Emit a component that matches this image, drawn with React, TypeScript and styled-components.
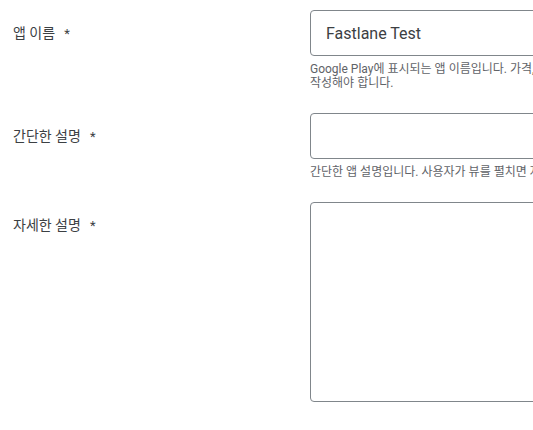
import { FC } from 'react';
import styled, { createGlobalStyle } from 'styled-components';

const GlobalStyle = createGlobalStyle`
  html, body {
    margin: 0;
    padding: 0;
    background: #ffffff;
    overflow: hidden;
  }
  body {
    font-family: Roboto, 'Noto Sans CJK KR', sans-serif;
  }
`;

const App: FC = () => {
  return (
    <>
      <GlobalStyle />
      <Form>
        <Field>
          <Label>
            앱 이름<Required>*</Required>
          </Label>
          <Control>
            <Input defaultValue="Fastlane Test" />
            <Helper>
              Google Play에 표시되는 앱 이름입니다. 가격, 순위, 이모티콘 또는 반복되는 특수 기호는 포함하지 말고 30자 이내로
              <br />
              작성해야 합니다.
            </Helper>
          </Control>
        </Field>
        <Field>
          <Label>
            간단한 설명<Required>*</Required>
          </Label>
          <Control>
            <Input defaultValue="" />
            <Helper>간단한 앱 설명입니다. 사용자가 뷰를 펼치면 자세한 설명을 볼 수 있습니다. 80자 이내로 작성해야 합니다.</Helper>
          </Control>
        </Field>
        <Field>
          <Label>
            자세한 설명<Required>*</Required>
          </Label>
          <Control>
            <TextArea defaultValue="" />
          </Control>
        </Field>
      </Form>
    </>
  );
};

export default App;

const Form = styled.div`
  display: flex;
  flex-direction: column;
  gap: 23px;
  padding: 10px 0 0 13px;
`;

const Field = styled.div`
  display: flex;
  align-items: flex-start;
`;

const Label = styled.div`
  flex: 0 0 297px;
  padding-top: 14px;
  font-size: 14px;
  line-height: 18px;
  color: #3c4043;
`;

const Required = styled.span`
  margin-left: 9px;
  font-size: 13px;
`;

const Control = styled.div`
  display: flex;
  flex-direction: column;
  gap: 6px;
  width: 680px;
  flex-shrink: 0;
`;

const Input = styled.input`
  box-sizing: border-box;
  width: 100%;
  height: 46px;
  padding: 0 15px;
  border: 1px solid #80868b;
  border-radius: 4px;
  font-family: Roboto, 'Noto Sans CJK KR', sans-serif;
  font-size: 16px;
  color: #3c4043;
  outline: none;
`;

const TextArea = styled.textarea`
  box-sizing: border-box;
  width: 100%;
  height: 200px;
  border: 1px solid #80868b;
  border-radius: 4px;
  resize: none;
  outline: none;
`;

const Helper = styled.div`
  font-size: 12px;
  line-height: 14px;
  color: #5f6368;
  white-space: nowrap;
`;
